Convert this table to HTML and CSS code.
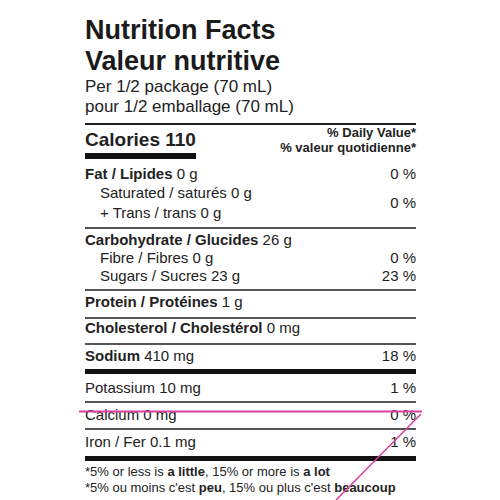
FILE: index.html
```html
<!DOCTYPE html>
<html lang="en">

<head>
    <meta charset="UTF-8">
    <meta name="viewport" content="width=device-width, initial-scale=1.0">
    <title>Nutrition Facts</title>
    <link rel="stylesheet" href="styles.css">
</head>

<body>
    <div class="label">
        <div class="head">
            <h1 class="title">Nutrition Facts<br>Valeur nutritive</h1>
            <p class="serving">Per 1/2 package (70 mL)<br>pour 1/2 emballage (70 mL)</p>
        </div>

        <div class="cal">
            <div class="cal-amount">Calories 110</div>
            <div class="dv">% Daily Value*<br>% valeur quotidienne*</div>
        </div>

        <!-- fat -->
        <div class="group fat">
            <div class="row"><span><b>Fat / Lipides</b> 0 g</span><span>0 %</span></div>
            <div class="row">
                <div class="sub">
                    <div>Saturated / saturés 0 g</div>
                    <div>+ Trans / trans 0 g</div>
                </div>
                <span>0 %</span>
            </div>
        </div>

        <!-- carbs -->
        <div class="group carb">
            <div class="row"><span><b>Carbohydrate / Glucides</b> 26 g</span></div>
            <div class="row indent"><span>Fibre / Fibres 0 g</span><span>0 %</span></div>
            <div class="row indent"><span>Sugars / Sucres 23 g</span><span>23 %</span></div>
        </div>

        <div class="group protein">
            <div class="row"><span><b>Protein / Protéines</b> 1 g</span></div>
        </div>

        <div class="group chol">
            <div class="row"><span><b>Cholesterol / Cholestérol</b> 0 mg</span></div>
        </div>

        <div class="group sodium thick">
            <div class="row"><span><b>Sodium</b> 410 mg</span><span>18 %</span></div>
        </div>

        <div class="group potassium">
            <div class="row"><span>Potassium 10 mg</span><span>1 %</span></div>
        </div>

        <div class="group calcium">
            <div class="row"><span>Calcium 0 mg</span><span>0 %</span></div>
        </div>

        <div class="group iron thick">
            <div class="row"><span>Iron / Fer 0.1 mg</span><span>1 %</span></div>
        </div>

        <p class="note">*5% or less is <b>a little</b>, 15% or more is <b>a lot</b><br>*5% ou moins c'est <b>peu</b>, 15% ou plus c'est <b>beaucoup</b></p>
    </div>

    <!-- pen marks drawn over the label -->
    <svg class="marks" width="500" height="500" viewBox="0 0 500 500">
        <line x1="79" y1="411.5" x2="422" y2="411.5" stroke="#d6409f" stroke-width="2" />
        <line x1="421" y1="414" x2="336" y2="500" stroke="#d6409f" stroke-width="1.5" />
    </svg>
</body>

</html>
```

FILE: styles.css
```css
* {
    box-sizing: border-box;
}

body {
    margin: 0;
    background: #fff;
    color: #222;
    font-family: "Liberation Sans", Arial, sans-serif;
    overflow: hidden;
}

.label {
    width: 331px;
    margin-left: 85px;
    padding-top: 15px;
}

.head {
    padding-bottom: 6px;
    border-bottom: 2px solid #222;
}

.title {
    margin: 0;
    font-size: 27px;
    line-height: 31px;
    font-weight: bold;
    color: #1a1a1a;
}

.serving {
    margin: 0;
    font-size: 17px;
    line-height: 20px;
}

.cal {
    display: flex;
    justify-content: space-between;
    align-items: flex-start;
}

.cal-amount {
    font-size: 19px;
    font-weight: bold;
    line-height: 22px;
    padding-top: 4px;
    padding-bottom: 2px;
    border-bottom: 6px solid #111;
}

.dv {
    font-size: 13px;
    font-weight: bold;
    line-height: 15px;
    text-align: right;
}

.group {
    padding: 2px 0 4px;
    border-bottom: 2px solid #555;
}

.group.thick {
    border-bottom: 5px solid #111;
}

.fat {
    padding-top: 6px;
}

.protein {
    padding-bottom: 6px;
}

.chol {
    padding-top: 0;
    padding-bottom: 6px;
}

.potassium {
    padding-top: 5px;
}

.calcium {
    padding-top: 3px;
}

.iron {
    padding-top: 3px;
    padding-bottom: 5px;
}

.row {
    display: flex;
    justify-content: space-between;
    align-items: center;
    font-size: 15px;
    line-height: 18px;
}

.row.indent,
.sub {
    padding-left: 15px;
}

.sub {
    line-height: 20px;
}

.note {
    margin: 0;
    padding-top: 3px;
    font-size: 13px;
    line-height: 16px;
}

.marks {
    position: absolute;
    top: 0;
    left: 0;
    pointer-events: none;
}
```
